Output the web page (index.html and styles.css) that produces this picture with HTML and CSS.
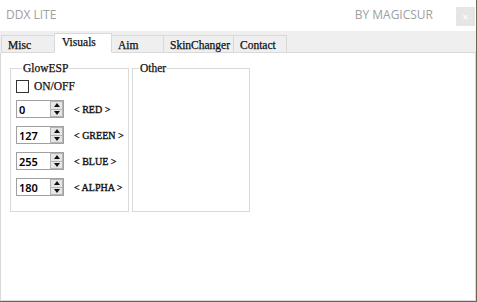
FILE: index.html
```html
<!DOCTYPE html>
<html lang="en">
<head>
    <meta charset="UTF-8">
    <title>DDX LITE</title>
    <link rel="stylesheet" href="styles.css">
</head>
<body>

<div class="window">
    <!-- Title bar -->
    <div class="titlebar">
        <span class="title">DDX LITE</span>
        <span class="author">BY MAGICSUR</span>
        <span class="close">×</span>
    </div>

    <!-- Tabs -->
    <div class="tabs">
        <div class="tab t-misc">Misc</div>
        <div class="tab t-visuals active">Visuals</div>
        <div class="tab t-aim">Aim</div>
        <div class="tab t-skin">SkinChanger</div>
        <div class="tab t-contact">Contact</div>
        <div class="tab-fill"></div>
    </div>

    <!-- Tab page -->
    <div class="page">
        <fieldset class="group glow">
            <legend>GlowESP</legend>
            <label class="check"><span class="box"></span>ON/OFF</label>
            <div class="row">
                <div class="spin"><span class="val">0</span><span class="arrows"><i class="up"></i><i class="down"></i></span></div>
                <span class="lbl">&lt; RED &gt;</span>
            </div>
            <div class="row">
                <div class="spin"><span class="val">127</span><span class="arrows"><i class="up"></i><i class="down"></i></span></div>
                <span class="lbl">&lt; GREEN &gt;</span>
            </div>
            <div class="row">
                <div class="spin"><span class="val">255</span><span class="arrows"><i class="up"></i><i class="down"></i></span></div>
                <span class="lbl">&lt; BLUE &gt;</span>
            </div>
            <div class="row">
                <div class="spin"><span class="val">180</span><span class="arrows"><i class="up"></i><i class="down"></i></span></div>
                <span class="lbl">&lt; ALPHA &gt;</span>
            </div>
        </fieldset>
        <fieldset class="group other">
            <legend>Other</legend>
        </fieldset>
    </div>
</div>

</body>
</html>
```

FILE: styles.css
```css
* {
    box-sizing: border-box;
}
body {
    margin: 0;
    background-color: #6b6650;
    font-family: "Liberation Serif", serif;
}
.window {
    width: 476px;
    height: 301px;
    background-color: white;
    display: flex;
    flex-direction: column;
}
.titlebar {
    height: 31px;
    display: flex;
    align-items: flex-start;
    font-family: "Open Sans", sans-serif;
    font-size: 12px;
    color: #a0a0a0;
}
.title {
    margin: 6px 0 0 6px;
}
.author {
    margin: 6px 0 0 auto;
}
.close {
    width: 19px;
    height: 19px;
    margin: 7px 1px 0 23px;
    background-color: #e6e6e6;
    color: white;
    font-size: 11px;
    text-align: center;
    line-height: 19px;
}
.tabs {
    height: 22px;
    display: flex;
    align-items: flex-end;
    background-color: #efefef;
    padding-left: 1px;
}
.tab {
    height: 18px;
    padding: 0 0 0 6px;
    border: 1px solid #d9d9d9;
    margin-right: -1px;
    font-size: 11.5px;
    line-height: 18px;
    color: #111;
    -webkit-text-stroke: 0.25px #111;
}
.t-misc { width: 54px; }
.t-visuals { width: 58px; }
.t-aim { width: 53px; }
.t-skin { width: 71px; }
.t-contact { width: 54px; }
.tab.active {
    height: 20px;
    padding-left: 7px;
    background-color: white;
    border-bottom-color: white;
    line-height: 16px;
    position: relative;
    z-index: 1;
}
.tab-fill {
    flex: 1;
    border-bottom: 1px solid #d9d9d9;
}
.page {
    flex: 1;
    border: 1px solid #d9d9d9;
    border-top: none;
    display: flex;
    gap: 3px;
    padding: 9px 0 0 9px;
}
.group {
    margin: 0;
    padding: 0;
    height: 150px;
    border: 1px solid #d9d9d9;
}
.group legend {
    font-size: 11.5px;
    padding: 0 1px;
    margin-left: 6px;
    color: #111;
    line-height: 12px;
    -webkit-text-stroke: 0.25px #111;
}
.glow {
    width: 119px;
    padding: 3px 0 0 5px;
}
.other {
    width: 118px;
}
.check {
    display: flex;
    align-items: center;
    gap: 5px;
    font-size: 11.5px;
    color: #111;
    height: 14px;
    margin-top: 2px;
    -webkit-text-stroke: 0.25px #111;
}
.box {
    width: 13px;
    height: 13px;
    border: 1px solid #333;
}
.row {
    display: flex;
    align-items: center;
    gap: 10px;
    margin-top: 8px;
    height: 18px;
}
.check + .row {
    margin-top: 7px;
}
.spin {
    width: 48px;
    height: 18px;
    border: 1px solid #a0a0a0;
    display: flex;
    align-items: center;
    justify-content: space-between;
    background-color: white;
}
.val {
    font-family: "Noto Sans", sans-serif;
    font-size: 11px;
    font-weight: 600;
    padding-left: 2px;
    color: #000;
}
.arrows {
    width: 13px;
    height: 16px;
    display: flex;
    flex-direction: column;
    border: 1px solid #b5b5b5;
    background-color: #e6e6e6;
}
.arrows i {
    flex: 1;
    display: flex;
    align-items: center;
    justify-content: center;
}
.arrows i + i {
    border-top: 1px solid #b5b5b5;
}
.arrows i::before {
    content: "";
    border-left: 3px solid transparent;
    border-right: 3px solid transparent;
}
.up::before {
    border-bottom: 4px solid #111;
}
.down::before {
    border-top: 4px solid #111;
}
.lbl {
    font-size: 10px;
    white-space: nowrap;
    color: #111;
    -webkit-text-stroke: 0.35px #111;
}
```
